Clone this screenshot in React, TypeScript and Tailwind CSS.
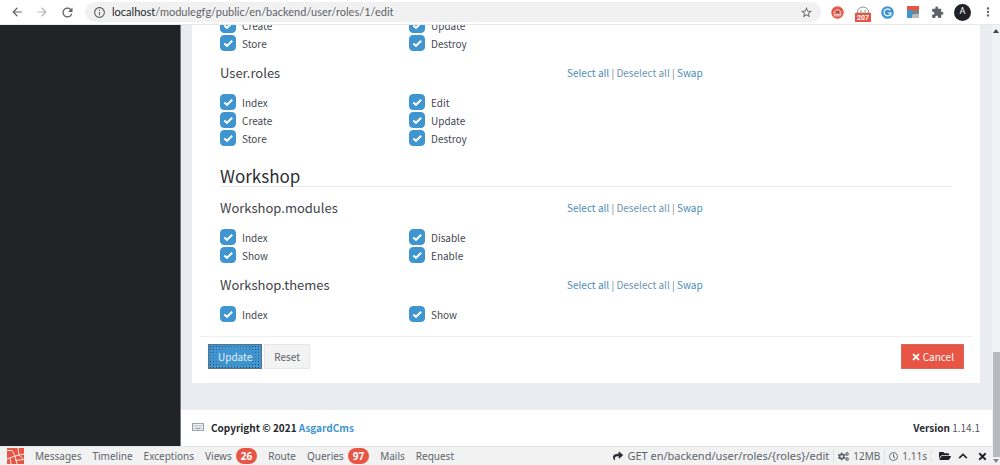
import React from "react";
import {
  MdArrowBack,
  MdArrowForward,
  MdRefresh,
  MdInfoOutline,
  MdStarBorder,
  MdExtension,
  MdMoreVert,
} from "react-icons/md";
import {
  FaShare,
  FaCogs,
  FaFolderOpen,
  FaTimes,
  FaChevronUp,
  FaRegClock,
  FaRegKeyboard,
} from "react-icons/fa";

type Group = { id: string; title?: string; left: string[]; right: string[] };

const userGroups: Group[] = [
  { id: "user-users", left: ["Create", "Store"], right: ["Update", "Destroy"] },
  {
    id: "user-roles",
    title: "User.roles",
    left: ["Index", "Create", "Store"],
    right: ["Edit", "Update", "Destroy"],
  },
];

const workshopGroups: Group[] = [
  { id: "workshop-modules", title: "Workshop.modules", left: ["Index", "Show"], right: ["Disable", "Enable"] },
  { id: "workshop-themes", title: "Workshop.themes", left: ["Index"], right: ["Show"] },
];

function Permission({ id, label }: { id: string; label: string }) {
  return (
    <div className="flex h-[18px] items-center gap-1.5">
      <span className="grid size-4">
        <input
          id={id}
          type="checkbox"
          defaultChecked
          className="peer col-start-1 row-start-1 size-4 appearance-none rounded-[4px] border border-gray-300 bg-white checked:border-[#3f95d0] checked:bg-[#3f95d0]"
        />
        <svg
          viewBox="0 0 16 16"
          className="pointer-events-none invisible col-start-1 row-start-1 size-4 fill-none stroke-white stroke-2 peer-checked:visible"
        >
          <path d="M4.3 8.4 7 10.8l5.2-5" />
        </svg>
      </span>
      <label htmlFor={id} className="text-[10px] text-[#44484f]">
        {label}
      </label>
    </div>
  );
}

function PermissionGroup({ group }: { group: Group }) {
  return (
    <section className="mb-[11px] last:mb-[13px]">
      {group.title && (
        <div className="mb-2.5 flex h-5 items-center px-3">
          <h4 className="w-[347px] text-[13px] leading-5 text-[#3f434a]">{group.title}</h4>
          <p className="text-[10px] leading-[14px] text-[#777d85]">
            <a href="#select" className="text-[#4b8db9]">Select all</a> |{" "}
            <a href="#deselect" className="text-[#6f95b0]">Deselect all</a> |{" "}
            <a href="#swap" className="text-[#4b8db9]">Swap</a>
          </p>
        </div>
      )}
      <div className="grid grid-cols-4">
        {[group.left, group.right].map((items, column) => (
          <div key={column} className="px-3">
            {items.map((item) => (
              <Permission key={item} id={`${group.id}-${item}`} label={item} />
            ))}
          </div>
        ))}
      </div>
    </section>
  );
}

function Extension({ label, children }: { label: string; children: React.ReactNode }) {
  return (
    <button aria-label={label} className="flex w-[25px] items-center justify-center">
      {children}
    </button>
  );
}

function BrowserBar() {
  return (
    <header className="flex h-[25px] shrink-0 items-center border-b border-[#e9e9ea] bg-white pl-2.5 text-[#5f6368]">
      <div className="flex w-[75px] items-center gap-[11px]">
        <button aria-label="Back"><MdArrowBack size={14} /></button>
        <button aria-label="Forward" className="text-[#b4b7bb]"><MdArrowForward size={14} /></button>
        <button aria-label="Reload"><MdRefresh size={15} /></button>
      </div>
      <div className="mr-1 flex h-5 min-w-0 flex-1 items-center gap-1.5 rounded-full bg-[#f1f1f2] pr-2 pl-2">
        <MdInfoOutline size={13} />
        <p className="flex-1 truncate font-['Lato',sans-serif] text-[11px]">
          <span className="text-[#25282c]">localhost</span>/modulegfg/public/en/backend/user/roles/1/edit
        </p>
        <button aria-label="Bookmark"><MdStarBorder size={13} /></button>
      </div>
      <div className="flex items-center">
        <Extension label="Red extension">
          <svg viewBox="0 0 13 13" className="size-[13px]">
            <circle cx="6.5" cy="6.5" r="6.2" fill="#e85545" />
            <path d="M2.2 8.3h8.6M3 9.8h7M3 6.5l2-2.6h3l2 2.6z" stroke="#e9d5d3" fill="none" />
            <path d="M4.5 6.2h4" stroke="#6d4547" strokeWidth="1.3" />
          </svg>
        </Extension>
        <Extension label="Counter extension">
          <svg viewBox="0 0 16 16" className="mt-1 h-4 w-4">
            <path d="M2 7a6 6 0 0 1 12 0z" fill="#fff" stroke="#8b9095" />
            <path d="M5 5h2m2 0h2" stroke="#8b9095" />
            <rect y="7" width="16" height="9" fill="#e85545" />
            <text x="8" y="14" textAnchor="middle" fill="#fff" className="font-['Roboto',sans-serif] text-[7px] font-bold">207</text>
          </svg>
        </Extension>
        <Extension label="Writing assistant">
          <svg viewBox="0 0 13 13" className="size-[13px]">
            <circle cx="6.5" cy="6.5" r="6.3" fill="#3f95d0" />
            <path d="M9.3 4.2A3.5 3.5 0 1 0 10 7H7m2.8 0v2.4" stroke="#fff" strokeWidth="1.2" fill="none" />
          </svg>
        </Extension>
        <Extension label="Tiles extension">
          <svg viewBox="0 0 12 12" className="size-3">
            <path d="M0 0h12v4H0z" fill="#e85545" />
            <path d="M0 4h7v8H0z" fill="#3f95d0" />
            <path d="M5 4h7v4H5z" fill="#7d8188" />
            <path d="M7 8h5v4H5V9z" fill="#b7bcc3" />
          </svg>
        </Extension>
        <Extension label="Extensions"><MdExtension size={13} /></Extension>
        <Extension label="Profile">
          <span className="flex size-[17px] items-center justify-center rounded-full bg-[#202228] font-['Roboto',sans-serif] text-[9px] text-white">
            A
          </span>
        </Extension>
        <Extension label="More"><MdMoreVert size={14} /></Extension>
      </div>
    </header>
  );
}

function Badge({ children }: { children: React.ReactNode }) {
  return (
    <span className="ml-1 rounded-full bg-[#e85545] px-[5px] py-px text-[10px] font-bold text-white">
      {children}
    </span>
  );
}

function DebugBar() {
  return (
    <div className="flex h-[19px] shrink-0 items-center border-t border-[#e4e5e6] bg-[#f2f2f2] pr-1 pl-[7px] font-['Noto_Sans',sans-serif] text-[10px] whitespace-nowrap text-[#5f646b]">
      <svg viewBox="0 0 17 16" className="mr-[11px] h-4 w-[17px]">
        <path fill="#e85545" d="M0 0h17v16H0z" />
        <path d="M0 2.500h5L8 8l9-2M11 0l1 7 5 5M0 11l8-3 2 8M3 10l1 6M8 12.500l9-1" stroke="#f7e6e4" fill="none" />
      </svg>
      <nav className="flex flex-1 items-center gap-[11px]">
        <a href="#messages">Messages</a>
        <a href="#timeline">Timeline</a>
        <a href="#exceptions">Exceptions</a>
        <a href="#views">Views<Badge>26</Badge></a>
        <a href="#route">Route</a>
        <a href="#queries">Queries<Badge>97</Badge></a>
        <a href="#mails">Mails</a>
        <a href="#request">Request</a>
      </nav>
      <div className="flex items-center">
        <span className="flex items-center gap-1 pr-1 text-[11px]">
          <FaShare size={10} className="text-[#2d3036]" />
          GET en/backend/user/roles/{"{roles}"}/edit
        </span>
        <span className="flex items-center gap-1 border-l border-[#e0e3e6] px-1">
          <FaCogs size={11} />
          12MB
        </span>
        <span className="flex items-center gap-1 border-l border-[#e0e3e6] px-1">
          <FaRegClock size={9} />
          1.11s
        </span>
        <span className="flex items-center gap-[7px] border-l border-[#e0e3e6] pl-[7px] text-[#202228]">
          <button aria-label="Open"><FaFolderOpen size={12} /></button>
          <button aria-label="Minimize"><FaChevronUp size={10} /></button>
          <button aria-label="Close" className="ml-0.5"><FaTimes size={11} /></button>
        </span>
      </div>
    </div>
  );
}

export default function App() {
  return (
    <div className="flex h-screen flex-col overflow-hidden bg-white font-['Noto_Sans_CJK_SC',sans-serif]">
      <BrowserBar />
      <div className="flex min-h-0 flex-1">
        <div className="flex min-w-0 flex-1 flex-col">
          <div className="flex min-h-0 flex-1">
            <aside className="w-[181px] shrink-0 border-r border-[#77797e] bg-[#222327]" />
            <div className="flex min-w-0 flex-1 flex-col justify-end overflow-hidden bg-[#e9edf1]">
              <main className="mr-3 mb-[27px] ml-[11px] shrink-0 bg-white">
                <form onSubmit={(event) => event.preventDefault()}>
                  <div className="px-4">
                    {userGroups.map((group) => (
                      <PermissionGroup key={group.id} group={group} />
                    ))}
                    <h3 className="mx-3 mt-4 mb-[11px] h-6 border-b border-[#e9eaec] text-[17px] leading-[26px] text-[#2b2e35]">
                      Workshop
                    </h3>
                    {workshopGroups.map((group) => (
                      <PermissionGroup key={group.id} group={group} />
                    ))}
                  </div>
                  <div className="mx-2 flex justify-between border-t border-[#f0f0f1] px-2 pt-[7px] pb-3.5 text-[10px]">
                    <div className="flex gap-0.5">
                      <button
                        type="submit"
                        className="h-[25px] border border-[#59708a] bg-[#3f95d0] bg-[radial-gradient(#3f95d0_45%,transparent_75%),radial-gradient(#2f4353_22%,transparent_24%)] bg-[length:100%_100%,3px_3px] px-[9px] text-[#e6eef4]"
                      >
                        Update
                      </button>
                      <button type="reset" className="h-[25px] border border-[#e6e7ea] bg-[#f3f3f3] px-[9px] text-[#5d6066]">
                        Reset
                      </button>
                    </div>
                    <a href="#roles" className="flex h-[25px] items-center gap-0.5 border border-[#d9685c] bg-[#e85545] px-[9px] text-white">
                      <FaTimes size={10} />
                      Cancel
                    </a>
                  </div>
                </form>
              </main>
              <footer className="flex h-9 shrink-0 items-center justify-between bg-white pr-3 pb-0.5 pl-[11px] text-[10px] text-[#54585f]">
                <p className="flex items-center gap-[7px] font-bold text-[#25282d]">
                  <FaRegKeyboard size={12} className="text-[#7c8b98]" />
                  <span>
                    Copyright © 2021 <a href="#asgard" className="text-[#3f95d0]">AsgardCms</a>
                  </span>
                </p>
                <p>
                  <b className="text-[#25282d]">Version</b> 1.14.1
                </p>
              </footer>
            </div>
          </div>
          <DebugBar />
        </div>
        <div className="flex w-2 shrink-0 flex-col items-center bg-[#f1f2f3] pt-1 pb-0.5">
          <svg viewBox="0 0 6 4" className="h-1 w-1.5 fill-[#444]"><path d="M0 4 3 0l3 4z" /></svg>
          <div className="flex-1" />
          <div className="mb-0.5 h-[105px] w-[7px] self-end bg-[#b6bac0]" />
          <svg viewBox="0 0 6 4" className="h-1 w-1.5 fill-[#888]"><path d="M0 0l3 4 3-4z" /></svg>
        </div>
      </div>
    </div>
  );
}
